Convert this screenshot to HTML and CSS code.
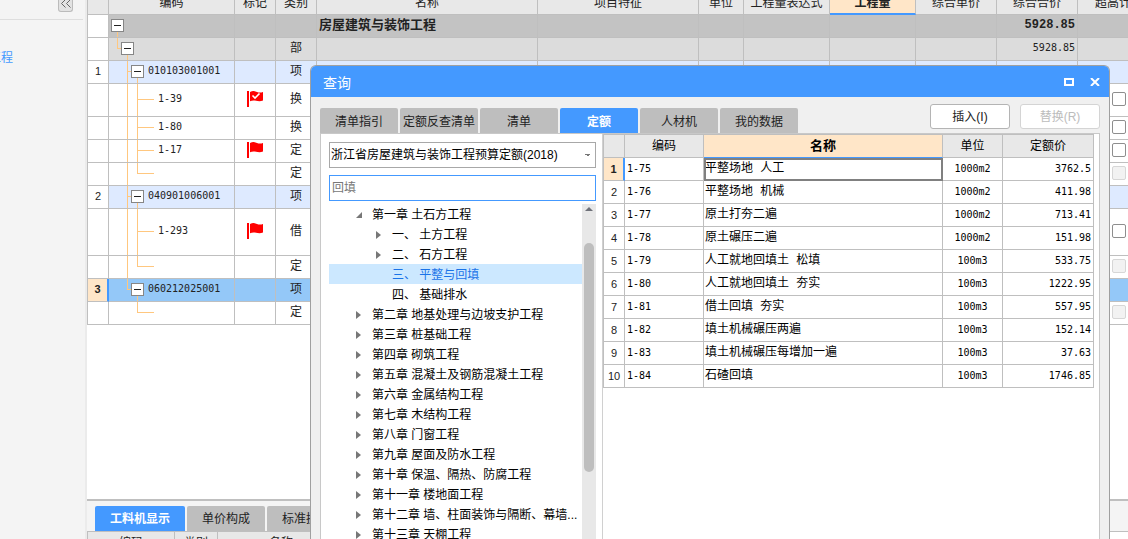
FILE: index.html
```html
<!DOCTYPE html>
<html lang="zh-CN">
<head>
<meta charset="utf-8">
<title>查询</title>
<link rel="stylesheet" href="styles.css">
</head>
<body>
<svg class="defs" width="0" height="0" aria-hidden="true">
  <symbol id="flag" viewBox="0 0 16 16">
    <path d="M0 0h2v16H0z" fill="#f00"/>
    <path d="M3 1C6-.5 8 .2 10 1s4 .6 6 0v8.500c-3 1.200-5 .6-7 .2s-4-.5-6 .6z" fill="#f00"/>
  </symbol>
  <symbol id="flag-check" viewBox="0 0 16 16">
    <use href="#flag"/>
    <path d="M5.500 4.500 8 7l4.500-4.500" fill="none" stroke="#fff" stroke-width="1.600"/>
  </symbol>
</svg>
<div class="app">
  <aside class="sidebar">
    <div class="sidebar-head"><button class="collapse" type="button" aria-label="收起"><svg width="10" height="9" viewBox="0 0 10 9"><path d="M4.500.5l-4 4 4 4M9.500.5l-4 4 4 4" fill="none" stroke="#666"/></svg></button></div>
    <a class="project" href="#">工程</a>
  </aside>
  <main class="main">
    <div class="bill-wrap">
      <table class="grid bill">
        <colgroup><col class="w21"><col class="w126"><col class="w41"><col class="w41"><col><col class="w161"><col class="w45"><col class="w86"><col class="w86"><col class="w81"><col class="w81"><col class="w82"></colgroup>
        <thead>
          <tr><th></th><th>编码</th><th>标记</th><th>类别</th><th>名称</th><th>项目特征</th><th>单位</th><th>工程量表达式</th><th class="current">工程量</th><th>综合单价</th><th>综合合价</th><th class="clipped">超高计</th></tr>
        </thead>
        <tbody>
          <tr class="total"><td class="no"></td><td class="tree t-root"><button class="toggle l1" type="button" aria-label="折叠"></button></td><td></td><td></td><td class="name">房屋建筑与装饰工程</td><td></td><td></td><td></td><td></td><td></td><td class="sum">5928.85</td><td></td></tr>
          <tr class="part"><td class="no"></td><td class="tree t-part"><button class="toggle l2" type="button" aria-label="折叠"></button></td><td></td><td class="kind">部</td><td></td><td></td><td></td><td></td><td></td><td></td><td class="num">5928.85</td><td></td></tr>
          <tr class="item"><td class="no">1</td><td class="tree t-item"><button class="toggle l3" type="button" aria-label="折叠"></button>010103001001</td><td></td><td class="kind">项</td><td></td><td></td><td></td><td></td><td></td><td></td><td></td><td></td></tr>
          <tr class="h33"><td class="no"></td><td class="tree t-child">1-39</td><td class="mark"><svg width="16" height="16"><use href="#flag-check"/></svg></td><td class="kind">换</td><td></td><td></td><td></td><td></td><td></td><td></td><td></td><td class="check"><input type="checkbox" aria-label="超高"></td></tr>
          <tr><td class="no"></td><td class="tree t-child">1-80</td><td></td><td class="kind">换</td><td></td><td></td><td></td><td></td><td></td><td></td><td></td><td class="check"><input type="checkbox" aria-label="超高"></td></tr>
          <tr><td class="no"></td><td class="tree t-child">1-17</td><td class="mark"><svg width="16" height="16"><use href="#flag"/></svg></td><td class="kind">定</td><td></td><td></td><td></td><td></td><td></td><td></td><td></td><td class="check"><input type="checkbox" aria-label="超高"></td></tr>
          <tr><td class="no"></td><td class="tree t-child-end"></td><td></td><td class="kind">定</td><td></td><td></td><td></td><td></td><td></td><td></td><td></td><td class="check"><input type="checkbox" aria-label="超高" disabled></td></tr>
          <tr class="item"><td class="no">2</td><td class="tree t-item"><button class="toggle l3" type="button" aria-label="折叠"></button>040901006001</td><td></td><td class="kind">项</td><td></td><td></td><td></td><td></td><td></td><td></td><td></td><td></td></tr>
          <tr class="h47"><td class="no"></td><td class="tree t-child">1-293</td><td class="mark"><svg width="16" height="16"><use href="#flag"/></svg></td><td class="kind">借</td><td></td><td></td><td></td><td></td><td></td><td></td><td></td><td class="check"><input type="checkbox" aria-label="超高"></td></tr>
          <tr><td class="no"></td><td class="tree t-child-end"></td><td></td><td class="kind">定</td><td></td><td></td><td></td><td></td><td></td><td></td><td></td><td class="check"><input type="checkbox" aria-label="超高" disabled></td></tr>
          <tr class="item selected"><td class="no active">3</td><td class="tree t-item-last"><button class="toggle l3" type="button" aria-label="折叠"></button>060212025001</td><td></td><td class="kind">项</td><td></td><td></td><td></td><td></td><td></td><td></td><td></td><td></td></tr>
          <tr><td class="no"></td><td class="tree t-leaf"></td><td></td><td class="kind">定</td><td></td><td></td><td></td><td></td><td></td><td></td><td></td><td class="check"><input type="checkbox" aria-label="超高" disabled></td></tr>
        </tbody>
      </table>
    </div>
    <section class="detail">
      <div class="tabs detail-tabs"><button class="tab wide on" type="button">工料机显示</button><button class="tab" type="button">单价构成</button><button class="tab" type="button">标准换算</button></div>
      <table class="grid detail-grid">
        <thead><tr><th class="w87">编码</th><th class="w43">类别</th><th class="w127">名称</th></tr></thead>
      </table>
    </section>
  </main>

  <section class="dialog" role="dialog" aria-labelledby="dialog-title">
    <header class="titlebar">
      <h1 id="dialog-title">查询</h1>
      <button class="win" type="button" aria-label="最大化"><svg width="10" height="8"><path d="M1 1h8v6H1z" fill="none" stroke="#fff" stroke-width="2"/></svg></button>
      <button class="win" type="button" aria-label="关闭"><svg width="10" height="8"><path d="M1 0l8 8M9 0L1 8" fill="none" stroke="#fff" stroke-width="2"/></svg></button>
    </header>
    <div class="toolbar">
      <div class="tabs"><button class="tab" type="button">清单指引</button><button class="tab" type="button">定额反查清单</button><button class="tab" type="button">清单</button><button class="tab on" type="button">定额</button><button class="tab" type="button">人材机</button><button class="tab" type="button">我的数据</button></div>
      <div class="actions"><button class="action" type="button">插入(I)</button><button class="action" type="button" disabled>替换(R)</button></div>
    </div>
    <div class="panes">
      <div class="catalog">
        <select class="field library" aria-label="定额库"><option>浙江省房屋建筑与装饰工程预算定额(2018)</option></select>
        <input class="field search" type="text" placeholder="回填" aria-label="搜索">
        <div class="outline">
          <ul class="chapters">
            <li class="open">第一章 土石方工程</li>
            <li class="sub">一、 土方工程</li>
            <li class="sub">二、 石方工程</li>
            <li class="sub end chosen">三、 平整与回填</li>
            <li class="sub end">四、 基础排水</li>
            <li>第二章 地基处理与边坡支护工程</li>
            <li>第三章 桩基础工程</li>
            <li>第四章 砌筑工程</li>
            <li>第五章 混凝土及钢筋混凝土工程</li>
            <li>第六章 金属结构工程</li>
            <li>第七章 木结构工程</li>
            <li>第八章 门窗工程</li>
            <li>第九章 屋面及防水工程</li>
            <li>第十章 保温、隔热、防腐工程</li>
            <li>第十一章 楼地面工程</li>
            <li>第十二章 墙、柱面装饰与隔断、幕墙...</li>
            <li>第十三章 天棚工程</li>
          </ul>
          <div class="scroll"><svg width="8" height="4"><path d="M0 4l4-4 4 4z" fill="#6e7179"/></svg><div class="thumb"></div></div>
        </div>
      </div>
      <div class="result">
        <table class="grid quota">
          <colgroup><col class="w21"><col class="w79"><col><col class="w60"><col class="w91"></colgroup>
          <thead><tr><th></th><th>编码</th><th class="current">名称</th><th>单位</th><th>定额价</th></tr></thead>
          <tbody>
            <tr><td class="no active">1</td><td class="code">1-75</td><td class="desc focus">平整场地 人工</td><td class="unit">1000m2</td><td class="num">3762.5</td></tr>
            <tr><td class="no">2</td><td class="code">1-76</td><td class="desc">平整场地 机械</td><td class="unit">1000m2</td><td class="num">411.98</td></tr>
            <tr><td class="no">3</td><td class="code">1-77</td><td class="desc">原土打夯二遍</td><td class="unit">1000m2</td><td class="num">713.41</td></tr>
            <tr><td class="no">4</td><td class="code">1-78</td><td class="desc">原土碾压二遍</td><td class="unit">1000m2</td><td class="num">151.98</td></tr>
            <tr><td class="no">5</td><td class="code">1-79</td><td class="desc">人工就地回填土 松填</td><td class="unit">100m3</td><td class="num">533.75</td></tr>
            <tr><td class="no">6</td><td class="code">1-80</td><td class="desc">人工就地回填土 夯实</td><td class="unit">100m3</td><td class="num">1222.95</td></tr>
            <tr><td class="no">7</td><td class="code">1-81</td><td class="desc">借土回填 夯实</td><td class="unit">100m3</td><td class="num">557.95</td></tr>
            <tr><td class="no">8</td><td class="code">1-82</td><td class="desc">填土机械碾压两遍</td><td class="unit">100m3</td><td class="num">152.14</td></tr>
            <tr><td class="no">9</td><td class="code">1-83</td><td class="desc">填土机械碾压每增加一遍</td><td class="unit">100m3</td><td class="num">37.63</td></tr>
            <tr><td class="no">10</td><td class="code">1-84</td><td class="desc">石碴回填</td><td class="unit">100m3</td><td class="num">1746.85</td></tr>
          </tbody>
        </table>
      </div>
    </div>
  </section>
</div>
</body>
</html>
```
FILE: styles.css
```css
* { box-sizing: border-box; }
html, body { height: 100%; }
body {
  margin: 0;
  overflow: hidden;
  font: 12px/16px "Liberation Sans", "Noto Sans CJK SC", sans-serif;
  color: #222;
  background: #fff;
}
button, input, select { font: inherit; color: inherit; margin: 0; padding: 0; }
ul { list-style: none; margin: 0; padding: 0; }
svg { display: block; }
.defs { position: absolute; }
.app { position: relative; display: flex; height: 100%; overflow: hidden; }

/* sidebar */
.sidebar { flex: 0 0 87px; overflow: hidden; background: #f4f4f4; border-right: 2px solid #ebebeb; }
.sidebar-head {
  display: flex;
  justify-content: flex-end;
  align-items: flex-start;
  height: 20px;
  margin-right: 2px;
  padding-right: 10px;
  border-bottom: 1px solid #dedede;
}
.collapse {
  display: flex;
  justify-content: center;
  align-items: flex-end;
  width: 15px;
  height: 12px;
  padding-bottom: 3px;
  background: #e2e2e2;
  border: 1px solid #bbb;
  border-top: 0;
  border-radius: 0 0 3px 3px;
}
.project { display: block; margin: 30px 0 0 -11px; color: #49f; text-decoration: none; }

/* grids */
.main { flex: 1; min-width: 0; display: flex; flex-direction: column; }
.bill-wrap { flex: 1; min-height: 0; overflow: hidden; }
.grid { table-layout: fixed; border-collapse: separate; border-spacing: 0; border-left: 1px solid #bfbfbf; }
.grid th, .grid td {
  height: 23px;
  padding: 0;
  overflow: hidden;
  white-space: nowrap;
  border-right: 1px solid #bfbfbf;
  border-bottom: 1px solid #bfbfbf;
}
.grid th { font-weight: normal; background: #e8e8e8; }
.grid th.current { font-weight: bold; background: #ffe6c8; border-bottom: 2px solid #49f; }
.grid .h33 td { height: 33px; }
.grid .h47 td { height: 47px; }
.bill { width: calc(100% + 32px); margin-top: -8px; }
.bill td { padding-bottom: 2px; }
.bill .clipped { padding-left: 17px; text-align: left; }
.w21 { width: 21px; } .w41 { width: 41px; } .w43 { width: 43px; } .w45 { width: 45px; }
.w60 { width: 60px; } .w79 { width: 79px; } .w81 { width: 81px; } .w82 { width: 82px; }
.w86 { width: 86px; } .w87 { width: 87px; } .w91 { width: 91px; } .w126 { width: 126px; }
.w127 { width: 127px; } .w161 { width: 161px; }
.total td { background-color: #c3c3c3; }
.part td { background-color: #dcdcdc; }
.item td { background-color: #deeaff; }
.selected td { background-color: #94c8f8; }
.grid td.no { text-align: center; font-size: 11px; background: #fff; }
.grid td.no.active { font-weight: bold; background: #ffe6c8; border-right: 2px solid #49f; }
.grid .kind, .grid .tree { padding-bottom: 2px; }
.kind { text-align: center; }
.bill .name { padding-left: 2px; font-size: 13px; font-weight: bold; }
.grid .num { padding-right: 2px; text-align: right; font: 10px/16px "DejaVu Sans Mono", monospace; }
.grid .sum { padding-right: 2px; text-align: right; font: bold 12px/16px "Liberation Mono", monospace; }
.mark svg { margin: 0 auto; }
.check { text-align: center; }
.check input {
  display: block;
  appearance: none;
  width: 14px;
  height: 14px;
  margin: 0 auto;
  background: #fff;
  border: 1px solid #8e8e8e;
  border-radius: 2px;
}
.check input:disabled { background: #f2f2f2; border-color: #d6d6d6; }

/* tree connectors */
.tree {
  --line: linear-gradient(#ffc77f, #ffc77f);
  --mid: calc(50% - 1px);
  font: 10px/16px "DejaVu Sans Mono", monospace;
  background-repeat: no-repeat;
}
.toggle {
  display: inline-block;
  vertical-align: middle;
  width: 13px;
  height: 13px;
  border: 1px solid #868686;
  background: linear-gradient(#222, #222) center / 7px 1px no-repeat #fff;
}
.l1 { margin-left: 2px; }
.l2 { margin-left: 12px; }
.l3 { margin: 0 4px 0 22px; }
.grid .t-child { padding-left: 49px; }
.t-root { background-image: var(--line); background-position: 8px 100%; background-size: 1px 50%; }
.t-part {
  background-image: var(--line), var(--line), var(--line);
  background-position: 8px 0, 8px var(--mid), 18px 100%;
  background-size: 1px 50%, 5px 1px, 1px 50%;
}
.t-item {
  background-image: var(--line), var(--line), var(--line);
  background-position: 18px 0, 18px var(--mid), 28px 100%;
  background-size: 1px 100%, 5px 1px, 1px 50%;
}
.t-item-last {
  background-image: var(--line), var(--line), var(--line);
  background-position: 18px 0, 18px var(--mid), 28px 100%;
  background-size: 1px 50%, 5px 1px, 1px 50%;
}
.t-child {
  background-image: var(--line), var(--line), var(--line);
  background-position: 18px 0, 28px var(--mid), 28px 0;
  background-size: 1px 100%, 17px 1px, 1px 100%;
}
.t-child-end {
  background-image: var(--line), var(--line), var(--line);
  background-position: 18px 0, 28px var(--mid), 28px 0;
  background-size: 1px 100%, 17px 1px, 1px 50%;
}
.t-leaf {
  background-image: var(--line), var(--line);
  background-position: 28px var(--mid), 28px 0;
  background-size: 17px 1px, 1px 50%;
}

/* tabs */
.tabs { display: flex; gap: 2px; }
.tab {
  width: 78px;
  height: 25px;
  border: 0;
  border-radius: 2px 2px 0 0;
  background: #bebebe;
  white-space: nowrap;
}
.tab.wide { width: 90px; }
.tab.on { color: #fff; font-weight: bold; background: #49f; }

/* lower pane */
.detail { flex: 0 0 40px; overflow: hidden; border-top: 2px solid #bfbfbf; background: #fff; }
.detail-tabs { padding: 5px 0 0 8px; background: #f4f4f4; border-bottom: 1px solid #bfbfbf; }
.detail-grid { width: 258px; }

/* dialog */
.dialog {
  position: absolute;
  top: 65px;
  right: 18px;
  bottom: 0;
  left: 310px;
  display: flex;
  flex-direction: column;
  overflow: hidden;
  background: #f0f0f0;
  border: 1px solid #a0a0a0;
  border-bottom: 0;
  border-radius: 6px 6px 0 0;
}
.titlebar { flex: none; display: flex; align-items: center; gap: 16px; height: 31px; padding: 0 9px 0 12px; color: #fff; background: #49f; }
.titlebar h1 { flex: 1; margin: 0; padding-top: 2px; font-size: 14px; line-height: 20px; font-weight: normal; }
.win { border: 0; background: none; }
.toolbar { flex: none; display: flex; justify-content: space-between; align-items: flex-end; padding: 7px 9px 0; }
.toolbar .tab { padding-top: 2px; }
.actions { display: flex; gap: 10px; padding-bottom: 4px; }
.action { width: 80px; height: 25px; background: #fff; border: 1px solid #b4b4b4; border-radius: 3px; }
.action:disabled { color: #bcbcbc; border-color: #d4d4d4; }
.panes { flex: 1; min-height: 0; display: flex; margin: 0 9px; background: #fff; border: 1px solid #c8c8c8; border-bottom: 0; }
.catalog { flex: 0 0 282px; display: flex; flex-direction: column; padding: 8px 6px 0 8px; border-right: 1px solid #d0d0d0; color: #000; }
.field { flex: none; width: 100%; height: 26px; border: 1px solid #a8a8a8; border-radius: 0; background: #fff; }
.library {
  appearance: none;
  padding: 0 20px 0 1px;
  background-color: #fff;
  background-image: linear-gradient(to top right, transparent 50%, #777 50%), linear-gradient(to top left, transparent 50%, #777 50%);
  background-position: right 7px center, right 4px center;
  background-size: 3px 3px;
  background-repeat: no-repeat;
}
.search { margin-top: 7px; padding: 0 2px; border-color: #49f; }
.search::placeholder { color: #777; opacity: 1; }
.outline { flex: 1; min-height: 0; display: flex; margin-top: 3px; overflow: hidden; }
.chapters { flex: 1; min-width: 0; }
.chapters li { display: flex; align-items: center; height: 20px; padding: 2px 0 0 27px; white-space: pre; }
.chapters li::before { content: ""; flex: none; width: 5px; height: 8px; margin-right: 11px; background: #777; clip-path: polygon(0 0, 100% 50%, 0 100%); }
.chapters .open::before { width: 6px; height: 6px; margin-right: 10px; clip-path: polygon(100% 0, 100% 100%, 0 100%); }
.chapters .sub { padding-left: 47px; }
.chapters .end::before { visibility: hidden; }
.chapters .chosen { color: #1a73e8; background: #cce8ff; }
.scroll { flex: 0 0 14px; display: flex; flex-direction: column; align-items: center; gap: 32px; padding-top: 3px; background: #e8e8e8; }
.thumb { flex: none; width: 10px; height: 229px; border-radius: 5px; background: #bebebe; }
.result { flex: 1; min-width: 0; padding-right: 5px; color: #000; }
.quota { width: 100%; border-top: 1px solid #bfbfbf; }
.quota td.no { color: #222; }
.quota .code { padding-left: 2px; font: 10px/16px "DejaVu Sans Mono", monospace; }
.quota .unit { text-align: center; font: 10px/16px "DejaVu Sans Mono", monospace; }
.quota .desc { padding-left: 1px; font-family: "Liberation Mono", "Noto Sans CJK SC", monospace; }
.quota .focus { outline: 2px solid #808080; outline-offset: -2px; }
.quota th.current { border-bottom-width: 1px; font-size: 13px; }
```
